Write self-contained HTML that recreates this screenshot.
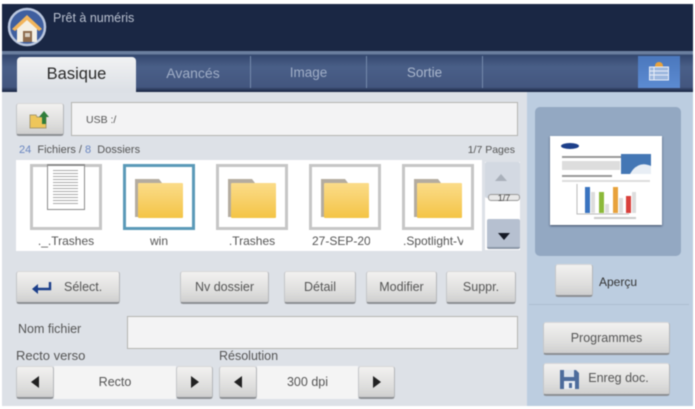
<!DOCTYPE html>
<html><head><meta charset="utf-8"><style>
html,body{margin:0;padding:0;background:#fff}
#r{position:relative;width:695px;height:409px;overflow:hidden;background:#fff;font-family:"Liberation Sans",sans-serif;filter:blur(.55px)}
#r div,#r svg{position:absolute;box-sizing:border-box}
.t{white-space:nowrap;line-height:14px;color:#444;font-size:11px}
.b{background:linear-gradient(#f2f1f0,#dededd 65%,#cfcfcf);border-radius:3px;border-bottom:2px solid #8d9094;border-left:1px solid #c4c6c9;border-right:1px solid #b4b6b9;border-top:1px solid #d8d8d8;color:#555;font-size:12.5px;text-align:center}
.th{width:72px;height:66px;top:164px;border:3px solid #c6c6c6;background:#fff}
.sep{width:1px;top:56px;height:32px;background:#7489ab}
.c{text-align:center;font-size:12px;color:#555;top:234px;width:92px;line-height:14px;white-space:nowrap;overflow:hidden}
.l{width:0;height:0;border-top:6px solid transparent;border-bottom:6px solid transparent;border-right:8px solid #222}
.rr{width:0;height:0;border-top:6px solid transparent;border-bottom:6px solid transparent;border-left:8px solid #222}
</style></head><body><div id="r">
<div style="left:2px;top:4px;width:691px;height:47px;background:#1a2744"></div>
<div style="left:2px;top:51px;width:691px;height:41px;background:linear-gradient(#6b7f9f 0,#6b7f9f 3px,#33476e 4px,#4a5f88 16px,#43567f 36px,#1f2c4a 40px)"></div>
<div style="left:2px;top:92px;width:525px;height:314px;background:#dde1e7"></div>
<div style="left:527px;top:92px;width:166px;height:314px;background:#bccde0"></div>
<svg style="left:7px;top:7px" width="40" height="40" viewBox="0 0 40 40"><circle cx="20" cy="20" r="18" fill="#3f5f9f" stroke="#b9c6de" stroke-width="2.5"/><path d="M5 22 20 8l15 14-3 2-12-10L8 24z" fill="#f2b45a"/><path d="M10 22 20 13l10 9v13H10z" fill="#f4efe4"/><rect x="16" y="24" width="9" height="11" fill="#8d6b4d"/><rect x="18" y="26" width="5" height="4" fill="#d8cfc2"/></svg>
<div class="t" style="left:53px;top:11px;color:#b9c0cf;font-size:12.5px">Prêt à numéris</div>
<div style="left:17px;top:57px;width:119px;height:35px;border-radius:4px 4px 0 0;background:linear-gradient(#f1f2f3,#dbdfe5)"></div>
<div class="t" style="left:17px;top:65px;width:119px;text-align:center;font-size:16.5px;line-height:18px;color:#2a2a2a">Basique</div>
<div class="t" style="left:136px;top:65px;width:114px;text-align:center;font-size:14px;line-height:16px;color:#9fadc6">Avancés</div>
<div class="t" style="left:251px;top:65px;width:115px;text-align:center;font-size:13.5px;line-height:16px;color:#9fadc6">Image</div>
<div class="t" style="left:367px;top:65px;width:115px;text-align:center;font-size:13.5px;line-height:16px;color:#a9b6cc">Sortie</div>
<div class="sep" style="left:250px"></div><div class="sep" style="left:366px"></div><div class="sep" style="left:482px"></div>
<div style="left:638px;top:56px;width:42px;height:32px;background:linear-gradient(#4b78bd,#5c8bd2)"></div>
<svg style="left:647px;top:59px" width="24" height="24" viewBox="0 0 24 24"><circle cx="12" cy="7" r="4" fill="#e8a23c"/><rect x="2.5" y="8" width="19" height="13" fill="#9db7de" stroke="#e8eef8"/><path d="M3 12h18M3 16h18M7 8v13" stroke="#e8eef8" fill="none"/></svg>
<div class="b" style="left:16px;top:103px;width:48px;height:33px"></div>
<svg style="left:29px;top:110px" width="22" height="20" viewBox="0 0 22 20"><path d="M1 5h6l1 2h9v11H1z" fill="#eec65a" stroke="#a89a70"/><path d="M15 1l5 6h-3v7h-4V7h-3z" fill="#2f7d3a"/></svg>
<div style="left:71px;top:102px;width:447px;height:34px;background:#f3f3f4;border:1px solid #b5b5b2"></div>
<div class="t" style="left:86px;top:113px;font-size:10.5px;color:#555">USB :/</div>
<div class="t" style="left:19px;top:143px;font-size:11px;color:#555"><span style="color:#6a86c0">24</span>&nbsp; Fichiers / <span style="color:#6a86c0">8</span>&nbsp; Dossiers</div>
<div class="t" style="right:180px;top:143px;font-size:10.5px;color:#555">1/7 Pages</div>
<div style="left:16px;top:160px;width:466px;height:91px;background:#fff"></div>
<div class="th" style="left:30px"></div>
<div style="left:47px;top:164px;width:38px;height:46px;background:#fff;border:1px solid #8c8c8c;border-top:2px solid #8c8c8c"></div>
<div style="left:53px;top:170px;width:25px;height:34px;background:repeating-linear-gradient(#aaa 0,#aaa 1px,#fff 1px,#fff 3px)"></div>
<div class="th" style="left:123px;border-color:#5b9ab8"></div>
<div class="th" style="left:216px"></div><div class="th" style="left:309px"></div><div class="th" style="left:402px"></div>
<svg style="left:134px;top:178px" width="50" height="42" viewBox="0 0 50 42"><defs><linearGradient id="g" x1="0" y1="0" x2="0" y2="1"><stop offset="0" stop-color="#fbdc8a"/><stop offset="1" stop-color="#f4c445"/></linearGradient></defs><path d="M1 1h24l3 4h20v34H1z" fill="#b4aca0"/><rect x="4" y="5" width="45" height="35" rx="1" fill="url(#g)"/></svg>
<svg style="left:227px;top:178px" width="50" height="42" viewBox="0 0 50 42"><path d="M1 1h24l3 4h20v34H1z" fill="#b4aca0"/><rect x="4" y="5" width="45" height="35" rx="1" fill="url(#g)"/></svg>
<svg style="left:320px;top:178px" width="50" height="42" viewBox="0 0 50 42"><path d="M1 1h24l3 4h20v34H1z" fill="#b4aca0"/><rect x="4" y="5" width="45" height="35" rx="1" fill="url(#g)"/></svg>
<svg style="left:413px;top:178px" width="50" height="42" viewBox="0 0 50 42"><path d="M1 1h24l3 4h20v34H1z" fill="#b4aca0"/><rect x="4" y="5" width="45" height="35" rx="1" fill="url(#g)"/></svg>
<div class="c" style="left:20px">._.Trashes</div>
<div class="c" style="left:113px">win</div>
<div class="c" style="left:206px">.Trashes</div>
<div class="c" style="left:312px;width:58px;text-align:left">27-SEP-20</div>
<div class="c" style="left:403px;width:60px;text-align:left">.Spotlight-V</div>
<div style="left:485px;top:162px;width:35px;height:88px;background:#fff"></div>
<div style="left:485px;top:162px;width:35px;height:36px;background:#d3d9e2;border-radius:2px"></div>
<div style="left:495px;top:174px;width:0;height:0;border-left:6px solid transparent;border-right:6px solid transparent;border-bottom:7px solid #a9b0ba"></div>
<div style="left:488px;top:194px;width:32px;height:7px;background:#e8e8e8;border:1px solid #999;border-radius:3px"></div>
<div class="t" style="left:488px;top:191px;width:32px;text-align:center;font-size:9px;color:#444">1/7</div>
<div style="left:487px;top:219px;width:33px;height:30px;background:#b6c0d0;border-bottom:2px solid #8c97a8;border-radius:2px"></div>
<div style="left:498px;top:233px;width:0;height:0;border-left:6px solid transparent;border-right:6px solid transparent;border-top:7px solid #151a26"></div>
<div class="b" style="left:16px;top:271px;width:104px;height:33px;line-height:31px;padding-left:47px;text-align:left">Sélect.</div>
<svg style="left:30px;top:280px" width="24" height="16" viewBox="0 0 24 16"><path d="M20 2v7H7" fill="none" stroke="#1c3f8a" stroke-width="2.4"/><path d="M8 4 2 9l6 5z" fill="#1c3f8a"/></svg>
<div class="b" style="left:180px;top:271px;width:89px;height:33px;line-height:31px">Nv dossier</div>
<div class="b" style="left:284px;top:271px;width:72px;height:33px;line-height:31px">Détail</div>
<div class="b" style="left:366px;top:271px;width:71px;height:33px;line-height:31px">Modifier</div>
<div class="b" style="left:446px;top:271px;width:70px;height:33px;line-height:31px">Suppr.</div>
<div class="t" style="left:18px;top:322px;font-size:12.5px;color:#555">Nom fichier</div>
<div style="left:127px;top:316px;width:391px;height:33px;background:#f3f3f4;border:1px solid #b5b5b2"></div>
<div class="t" style="left:16px;top:349px;font-size:13px;color:#555">Recto verso</div>
<div class="t" style="left:219px;top:349px;font-size:12.5px;color:#555">Résolution</div>
<div style="left:54px;top:366px;width:122px;height:33px;background:#f4f4f4"></div>
<div class="t" style="left:54px;top:375px;width:122px;text-align:center;font-size:12.5px;color:#555">Recto</div>
<div class="b" style="left:16px;top:366px;width:38px;height:33px"></div>
<div class="l" style="left:31px;top:376px"></div>
<div class="b" style="left:176px;top:366px;width:37px;height:33px"></div>
<div class="rr" style="left:191px;top:376px"></div>
<div style="left:257px;top:366px;width:101px;height:33px;background:#f4f4f4"></div>
<div class="t" style="left:257px;top:375px;width:101px;text-align:center;font-size:12.5px;color:#555">300 dpi</div>
<div class="b" style="left:219px;top:366px;width:38px;height:33px"></div>
<div class="l" style="left:234px;top:376px"></div>
<div class="b" style="left:358px;top:366px;width:37px;height:33px"></div>
<div class="rr" style="left:373px;top:376px"></div>
<div style="left:535px;top:107px;width:146px;height:149px;background:#93a8c2;border-radius:5px"></div>
<div style="left:550px;top:136px;width:112px;height:89px;background:#fff;box-shadow:0 1px 2px #3d4c66"></div>
<svg style="left:550px;top:136px" width="112" height="89" viewBox="0 0 112 89"><ellipse cx="20" cy="10" rx="9" ry="3" fill="#1c3f8a"/><rect x="12" y="20" width="60" height="2" fill="#999"/><rect x="12" y="25" width="58" height="9" fill="#ddd"/><rect x="71" y="18" width="30" height="20" fill="#4477b5"/><path d="M80 38q8-14 21-8v8z" fill="#e8eef5"/><rect x="12" y="39" width="50" height="2" fill="#999"/><rect x="12" y="44" width="88" height="2" fill="#ddd"/><path d="M27 48v30h52" fill="none" stroke="#bbb"/><rect x="35" y="51" width="5" height="26" fill="#3a74c0"/><rect x="41" y="56" width="4" height="21" fill="#ddd"/><rect x="49" y="56" width="5" height="21" fill="#8cb93a"/><rect x="55" y="68" width="4" height="9" fill="#ddd"/><rect x="63" y="51" width="5" height="26" fill="#e8a23c"/><rect x="69" y="62" width="4" height="15" fill="#ddd"/><rect x="76" y="60" width="5" height="17" fill="#d9403c"/><rect x="82" y="56" width="4" height="21" fill="#ddd"/><rect x="44" y="81" width="42" height="2" fill="#ccc"/></svg>
<div class="b" style="left:555px;top:264px;width:38px;height:33px"></div>
<div class="t" style="left:599px;top:275px;font-size:12px;color:#333">Aperçu</div>
<div style="left:529px;top:304px;width:160px;height:1px;background:#adbdd0"></div>
<div class="b" style="left:543px;top:322px;width:127px;height:33px;line-height:31px">Programmes</div>
<div class="b" style="left:543px;top:363px;width:127px;height:33px;line-height:29px;padding-left:24px">Enreg doc.</div>
<svg style="left:560px;top:370px" width="19" height="19" viewBox="0 0 19 19"><path d="M0 0h16l3 3v16H0z" fill="#4d6c9c"/><rect x="4" y="0" width="10" height="7" fill="#dbe2ec"/><rect x="4" y="11" width="11" height="8" fill="#e8edf3"/><rect x="9" y="13" width="3" height="5" fill="#4d6c9c"/></svg>
</div></body></html>
